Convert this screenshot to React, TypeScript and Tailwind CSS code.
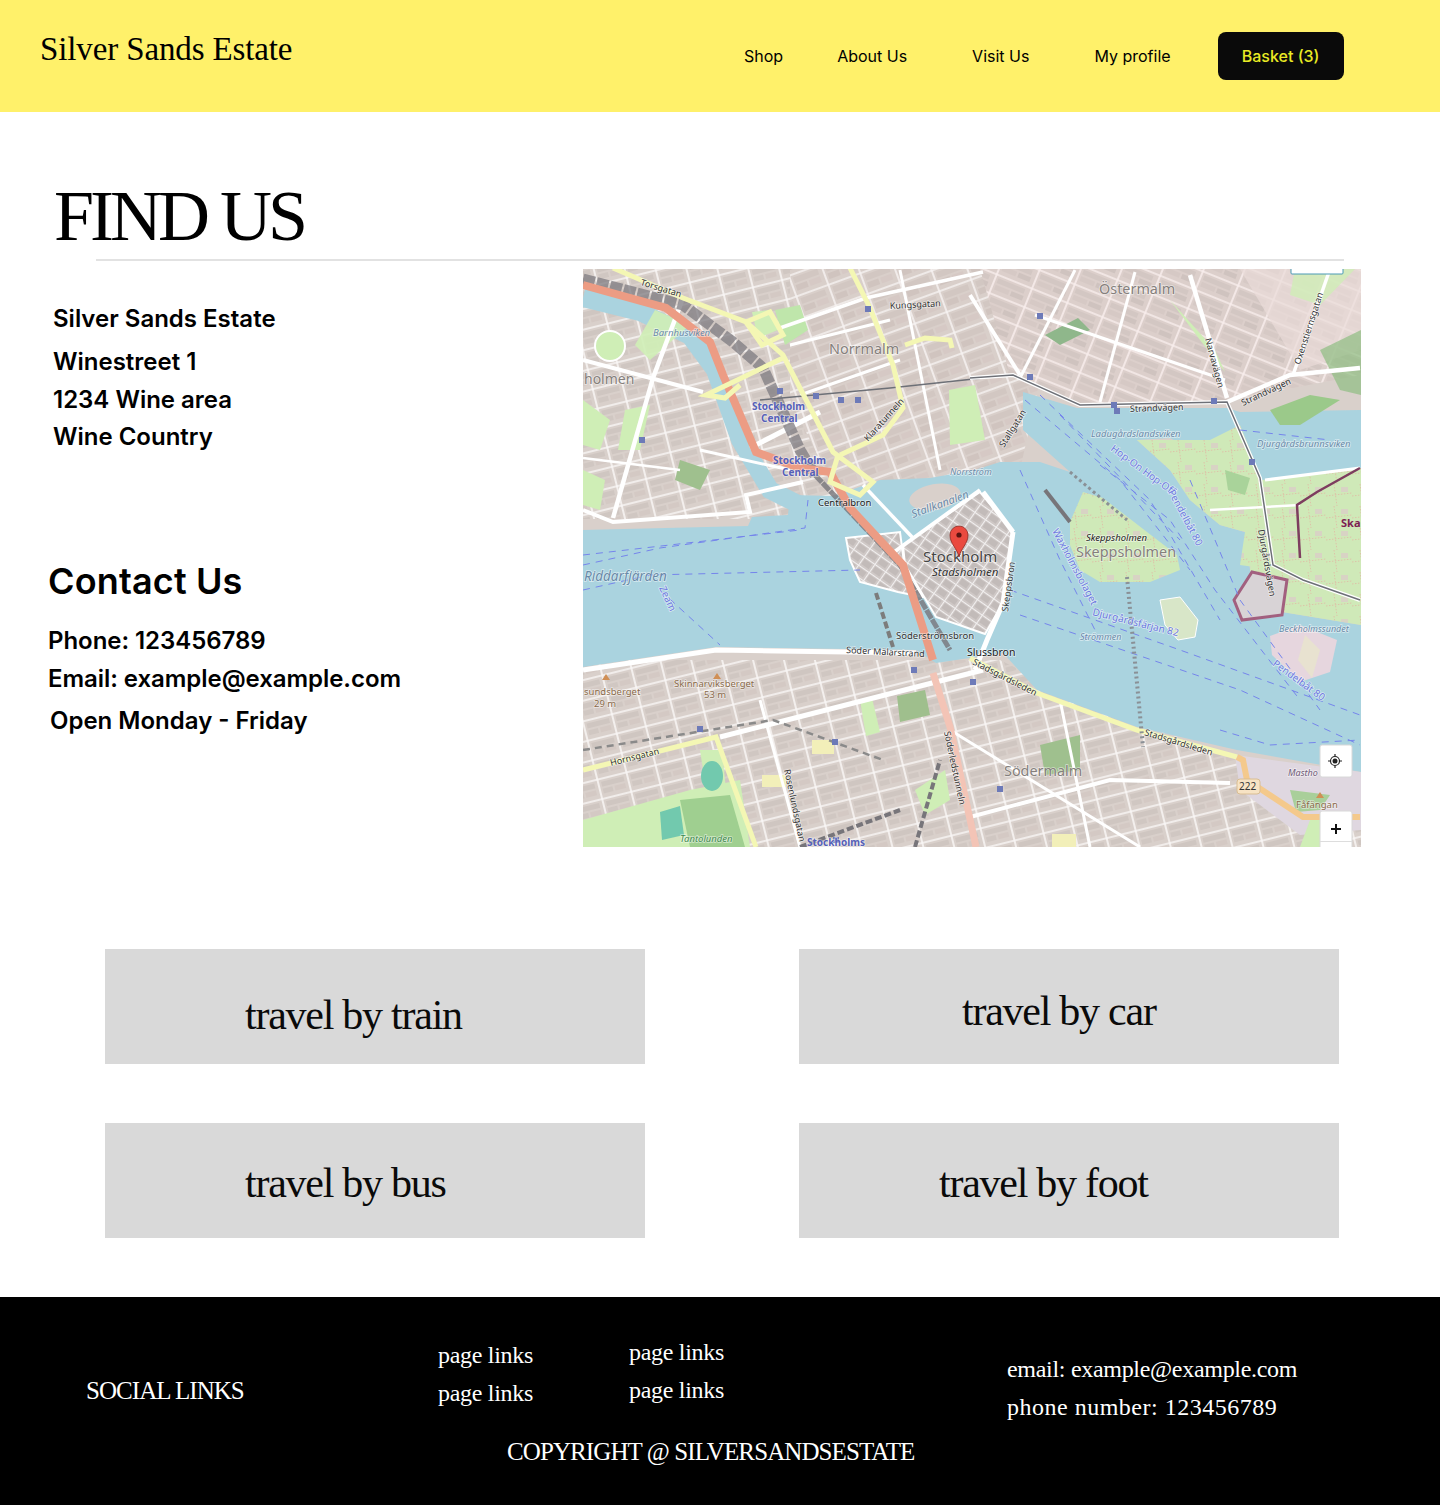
const navLinks = [
  { label: "Shop", className: "ml-0" },
  { label: "About Us", className: "ml-[54px]" },
  { label: "Visit Us", className: "ml-[65px]" },
  { label: "My profile", className: "ml-[65px]" },
];

const whiteRoads: [string, number][] = [
  ["M583 360 L703 392", 4],
  ["M683 298 L653 378 L613 518", 4.5],
  ["M583 510 L613 522 L750 512 L746 495 L803 482", 4],
  ["M780 328 L866 298 L983 272", 3.5],
  ["M970 295 L1020 375", 4],
  ["M1190 275 L1227 398", 4.5],
  ["M1227 402 L1290 375 L1360 368", 4.5],
  ["M1330 269 L1293 375", 3.5],
  ["M720 737 L983 670", 5],
  ["M970 817 L1110 780 L1230 783", 4],
  ["M583 670 L716 650 L916 653", 5],
  ["M1013 532 L1003 603 L987 640 L975 670", 5],
  ["M890 555 L980 490", 4],
  ["M863 485 L913 538", 3.5],
  ["M983 492 L1013 532", 5],
  ["M790 470 L700 450", 3],
  ["M790 345 L890 320", 3],
  ["M800 395 L900 360", 3],
  ["M900 270 L940 470", 3],
  ["M1020 378 L1075 270", 3],
  ["M1100 402 L1135 272", 3],
  ["M1035 315 L1225 380", 3],
  ["M800 847 L760 700", 3],
  ["M1090 847 L1060 700", 3],
  ["M950 730 L1140 847", 3],
  ["M1265 480 L1360 468", 3],
  ["M1210 510 L1300 505", 2.5],
  ["M583 458 L680 470", 2.5],
  ["M750 448 L820 412", 5],
];

const yellowRoads = [
  "M613 268 L683 298 L746 322 L783 355 L833 452 L873 482 L860 495 L830 482 L838 455",
  "M850 268 L870 308 L893 365 L903 408 L883 435 L840 455",
  "M783 358 L706 395 L725 398 L740 385",
  "M746 322 L770 312 L783 335 L762 345 L746 322",
  "M905 345 L925 338 L950 340 L952 348",
  "M583 770 L716 737 L756 847",
  "M970 658 L1037 693 L1137 730 L1237 757",
];

const ferryLines = [
  "M583 565 L660 548 L805 528 L808 500",
  "M583 590 L650 575 L860 570",
  "M660 590 L720 645",
  "M583 555 L800 530",
  "M1025 400 L1120 480 L1190 570",
  "M1040 395 L1150 500 L1220 620",
  "M1060 415 L1180 540",
  "M1020 470 L1060 560 L1100 640",
  "M1010 590 L1180 650 L1360 715",
  "M1020 615 L1240 690 L1360 745",
  "M1100 465 L1170 520 L1215 590 L1300 700",
  "M1190 480 L1240 600 L1320 710",
  "M1220 730 L1270 745 L1360 740",
  "M1240 430 L1330 440",
];

const labels: { text: string; x: number; y: number; size: number; fill: string; rotate?: number; italic?: boolean; bold?: boolean }[] = [
  { text: "Östermalm", x: 1099, y: 294, size: 14.4, fill: "#857f7c" },
  { text: "Norrmalm", x: 829, y: 354, size: 14.4, fill: "#857f7c" },
  { text: "holmen", x: 584, y: 384, size: 14, fill: "#857f7c" },
  { text: "Stockholm", x: 923, y: 562, size: 15, fill: "#444444" },
  { text: "Stadsholmen", x: 932, y: 576, size: 11.5, fill: "#333333", italic: true },
  { text: "Skeppsholmen", x: 1076, y: 557, size: 14.4, fill: "#857f7c" },
  { text: "Skeppsholmen", x: 1086, y: 541, size: 9.5, fill: "#222222", italic: true },
  { text: "Södermalm", x: 1004, y: 776, size: 14.4, fill: "#857f7c" },
  { text: "Riddarfjärden", x: 584, y: 581, size: 13.5, fill: "#6a8aa8", italic: true },
  { text: "Stockholm", x: 752, y: 410, size: 10, fill: "#5560b8", bold: true },
  { text: "Central", x: 761, y: 422, size: 10, fill: "#5560b8", bold: true },
  { text: "Stockholm", x: 773, y: 464, size: 10, fill: "#5560b8", bold: true },
  { text: "Central", x: 782, y: 476, size: 10, fill: "#5560b8", bold: true },
  { text: "Stockholms", x: 807, y: 846, size: 10, fill: "#5560b8", bold: true },
  { text: "Centralbron", x: 818, y: 506, size: 9.5, fill: "#222222" },
  { text: "Söderströmsbron", x: 896, y: 639, size: 9.5, fill: "#333333" },
  { text: "Söder Mälarstrand", x: 846, y: 653, size: 9, fill: "#333333", rotate: 3 },
  { text: "Slussbron", x: 967, y: 656, size: 10.5, fill: "#222222" },
  { text: "Kungsgatan", x: 890, y: 309, size: 9, fill: "#333333", rotate: -3 },
  { text: "Strandvägen", x: 1130, y: 412, size: 9, fill: "#333333", rotate: -2 },
  { text: "Strandvägen", x: 1243, y: 406, size: 9, fill: "#333333", rotate: -25 },
  { text: "Torsgatan", x: 640, y: 285, size: 9, fill: "#333333", rotate: 17 },
  { text: "Klaratunneln", x: 868, y: 442, size: 9, fill: "#333333", rotate: -48 },
  { text: "Stallgatan", x: 1004, y: 448, size: 9, fill: "#333333", rotate: -58 },
  { text: "Narvavägen", x: 1205, y: 339, size: 9, fill: "#333333", rotate: 75 },
  { text: "Oxenstiernsgatan", x: 1300, y: 365, size: 9, fill: "#333333", rotate: -72 },
  { text: "Djurgårdsvägen", x: 1258, y: 530, size: 9, fill: "#333333", rotate: 80 },
  { text: "Hornsgatan", x: 611, y: 766, size: 9, fill: "#333333", rotate: -14 },
  { text: "Rosenlundsgatan", x: 784, y: 770, size: 9, fill: "#333333", rotate: 78 },
  { text: "Söderledstunneln", x: 944, y: 732, size: 9, fill: "#333333", rotate: 78 },
  { text: "Skeppsbron", x: 1008, y: 612, size: 9, fill: "#333333", rotate: -82 },
  { text: "Stadsgårdsleden", x: 972, y: 664, size: 9, fill: "#333333", rotate: 27 },
  { text: "Stadsgårdsleden", x: 1144, y: 735, size: 9, fill: "#333333", rotate: 17 },
  { text: "Skinnarviksberget", x: 674, y: 687, size: 9.5, fill: "#8a6a4a" },
  { text: "53 m", x: 704, y: 698, size: 9.5, fill: "#8a6a4a" },
  { text: "sundsberget", x: 584, y: 695, size: 9.5, fill: "#8a6a4a" },
  { text: "29 m", x: 594, y: 707, size: 9.5, fill: "#8a6a4a" },
  { text: "Tantolunden", x: 680, y: 842, size: 9.5, fill: "#3f8a4f", italic: true },
  { text: "Barnhusviken", x: 653, y: 336, size: 9.5, fill: "#6a8aa8", italic: true },
  { text: "Ladugårdslandsviken", x: 1091, y: 437, size: 9.5, fill: "#6a8aa8", italic: true },
  { text: "Djurgårdsbrunnsviken", x: 1257, y: 447, size: 9.5, fill: "#6a8aa8", italic: true },
  { text: "Stallkanalen", x: 913, y: 518, size: 11, fill: "#6a8aa8", italic: true, rotate: -20 },
  { text: "Norrström", x: 950, y: 475, size: 9, fill: "#6a8aa8", italic: true },
  { text: "Strömmen", x: 1080, y: 640, size: 9, fill: "#6a8aa8", italic: true },
  { text: "Beckholmssundet", x: 1279, y: 632, size: 9, fill: "#6a8aa8", italic: true },
  { text: "Hop-On Hop-Off", x: 1110, y: 450, size: 10, fill: "#6c78e0", rotate: 36 },
  { text: "Pendelbåt 80", x: 1168, y: 492, size: 10, fill: "#6c78e0", rotate: 62 },
  { text: "Pendelbåt 80", x: 1272, y: 665, size: 10, fill: "#6c78e0", rotate: 36 },
  { text: "Waxholmsbolaget", x: 1052, y: 531, size: 10, fill: "#6c78e0", rotate: 62 },
  { text: "Djurgårdsfärjan 82", x: 1092, y: 615, size: 10, fill: "#6c78e0", rotate: 14 },
  { text: "Zeam", x: 659, y: 588, size: 10, fill: "#6c78e0", rotate: 65 },
  { text: "Mastho", x: 1288, y: 776, size: 9, fill: "#6f5a78", italic: true },
  { text: "Fåfängan", x: 1296, y: 808, size: 9.5, fill: "#8a6a4a" },
];

function MapPatterns() {
  return (
    <defs>
      <filter id="soften" x="0" y="0" width="100%" height="100%">
        <feGaussianBlur stdDeviation="0.45" />
      </filter>
      <pattern id="blocksA" width="34" height="22" patternUnits="userSpaceOnUse" patternTransform="rotate(-20)">
        <rect width="34" height="22" fill="#d9cfca" />
        <rect x="4" y="4" width="26" height="6" fill="#d2c7c2" />
        <rect x="4" y="12" width="12" height="6" fill="#d0c4bf" />
        <rect x="18" y="12" width="12" height="6" fill="#d6c9c5" />
        <path d="M0 1 H34 M1 0 V22" stroke="#f7f3f2" strokeWidth="1.6" />
      </pattern>
      <pattern id="blocksB" width="38" height="20" patternUnits="userSpaceOnUse" patternTransform="rotate(22)">
        <rect width="38" height="20" fill="#dccfcb" />
        <rect x="4" y="4" width="29" height="5" fill="#d3c7c3" />
        <rect x="4" y="11" width="15" height="5" fill="#d6c9c5" />
        <rect x="21" y="11" width="13" height="5" fill="#cfc3bf" />
        <path d="M0 1 H38 M1 0 V20" stroke="#f9eeed" strokeWidth="1.6" />
      </pattern>
      <pattern id="blocksC" width="30" height="20" patternUnits="userSpaceOnUse" patternTransform="rotate(-14)">
        <rect width="30" height="20" fill="#d9d0cb" />
        <rect x="4" y="4" width="23" height="5" fill="#cfc6c1" />
        <rect x="4" y="11" width="10" height="5" fill="#d0c7c2" />
        <rect x="16" y="11" width="11" height="5" fill="#d4c9c4" />
        <path d="M0 1 H30 M1 0 V20" stroke="#faf7f6" strokeWidth="1.6" />
      </pattern>
      <pattern id="blocksD" width="13" height="10" patternUnits="userSpaceOnUse" patternTransform="rotate(35)">
        <rect width="13" height="10" fill="#cfc8c6" />
        <rect x="2" y="2" width="9" height="6" fill="#c2bbb9" />
        <path d="M0 .5 H13 M.5 0 V10" stroke="#f2f0f0" strokeWidth="1" />
      </pattern>
      <pattern id="greenDots" width="26" height="22" patternUnits="userSpaceOnUse">
        <rect width="26" height="22" fill="#cfe9b8" />
        <rect x="15" y="3" width="7" height="5" fill="#d8d3c4" />
        <path d="M0 12 L26 9 M8 0 L11 22" stroke="#e6a79c" strokeWidth="0.6" strokeDasharray="1.5 1.5" />
      </pattern>
    </defs>
  );
}

function StockholmMap() {
  return (
    <svg
      viewBox="583 269 778 578"
      className="block w-[778px] h-[578px] font-['Noto_Sans',sans-serif]"
      role="img"
      aria-label="Map of central Stockholm"
    >
      <MapPatterns />
      <g filter="url(#soften)">
        <rect x="583" y="269" width="778" height="578" fill="#d9d0cb" />

        {/* districts */}
        <rect x="583" y="269" width="260" height="250" fill="url(#blocksC)" />
        <path d="M790 269 H1000 L1040 380 L1020 470 L840 500 L790 400 Z" fill="url(#blocksA)" />
        <path d="M980 269 H1361 V375 L1230 400 L1080 405 L1010 375 Z" fill="url(#blocksB)" />
        <path d="M583 660 H1000 L1140 730 L1361 790 V847 H583 Z" fill="url(#blocksC)" />
        <path d="M1240 269 H1361 V350 L1300 370 Z" fill="#eadbd8" opacity="0.7" />

        {/* water */}
        <path
          d="M583 530 L748 526 L752 517 L788 515 L790 495 L833 496 L880 480 L930 478 L975 470 L1000 462 L1040 462 L1070 472 L1023 430 L1023 392 L1077 408 L1227 408 L1240 412 L1361 410 V468 L1320 490 L1300 495 L1262 480 L1230 470 L1170 438 L1137 440 L1170 470 L1190 500 L1220 525 L1245 532 L1250 570 L1270 610 L1361 625 V772 L1237 750 L1137 727 L1037 690 L1003 653 L936 663 L916 650 L716 647 L583 667 Z"
          fill="#aad3df"
        />
        <path d="M583 298 L640 312 L690 336 L715 370 L740 440 L770 490 L800 505" fill="none" stroke="#aad3df" strokeWidth="18" />

        {/* islands and land over the water */}
        <path d="M1070 522 L1083 492 L1103 498 L1147 532 L1177 555 L1180 570 L1150 582 L1100 582 L1080 570 L1070 545 Z" fill="url(#greenDots)" />
        <path d="M1160 600 L1180 597 L1198 620 L1195 637 L1178 640 L1165 625 Z" fill="#d8e6c8" stroke="#ffffff" />
        <path d="M846 538 L900 532 L905 570 L923 597 L898 592 L860 582 L850 560 Z" fill="url(#blocksD)" stroke="#ffffff" strokeWidth="2" />
        <path d="M903 545 L980 492 L1013 532 L1003 603 L985 634 L936 617 L920 590 L905 565 Z" fill="url(#blocksD)" stroke="#ffffff" strokeWidth="2" />
        <ellipse cx="935" cy="497" rx="26" ry="13" fill="#d9d0cb" transform="rotate(-10 935 497)" />
        <path d="M1210 440 L1240 425 L1262 480 L1275 570 L1240 565 L1245 532 L1220 525 L1190 500 L1170 470 L1137 440 Z" fill="url(#greenDots)" />
        <path d="M1262 480 L1361 468 V625 L1270 610 L1250 570 Z" fill="url(#greenDots)" />
        <path d="M1270 636 L1300 625 L1337 640 L1330 672 L1300 682 L1272 655 Z" fill="#e6d6de" />
        <path d="M1305 635 L1320 650 L1312 678 L1298 660 Z" fill="#e8e2d0" />
        <path d="M1234 600 L1252 572 L1287 580 L1282 615 L1242 620 Z" fill="#d8d3d6" stroke="#a2607f" strokeWidth="3" />
        <path d="M1235 755 L1361 772 V830 L1300 835 L1240 790 Z" fill="#dfd7e0" />

        {/* parks */}
        <path d="M583 400 L610 420 L600 450 L583 445 Z" fill="#cfeeb6" />
        <path d="M690 325 L655 310 L635 345 L650 360 Z" fill="#cfeeb6" opacity="0.9" />
        <path d="M583 470 L605 480 L600 510 L583 505 Z" fill="#cfeeb6" />
        <path d="M625 410 L650 405 L640 450 L618 450 Z" fill="#cfeeb6" />
        <path d="M680 460 L710 470 L700 490 L675 480 Z" fill="#9fc08e" />
        <circle cx="610" cy="346" r="15" fill="#cfeeb6" stroke="#ffffff" strokeWidth="2" />
        <path d="M752 312 L770 310 L778 330 L758 338 Z" fill="#cfeeb6" />
        <path d="M775 310 L800 305 L808 330 L785 345 Z" fill="#bfe6ab" />
        <path d="M949 390 L975 385 L985 440 L950 445 Z" fill="#cfeeb6" />
        <path d="M1045 335 L1078 318 L1090 330 L1060 345 Z" fill="#8fb78b" />
        <path d="M1225 470 L1250 478 L1245 495 L1228 490 Z" fill="#a9d39a" />
        <path d="M1270 410 L1310 395 L1340 400 L1300 425 L1280 425 Z" fill="#9bc98a" />
        <path d="M1170 300 L1215 350 L1225 372 L1200 340 Z" fill="#cfeeb6" />
        <path d="M1295 269 L1355 269 L1320 305 L1290 295 Z" fill="#cfeeb6" opacity="0.8" />
        <path d="M1320 350 L1361 330 V395 L1340 390 Z" fill="#8fbe82" opacity="0.7" />
        <path d="M583 820 L690 790 L740 780 L750 847 H583 Z" fill="#cfeeb6" />
        <path d="M680 800 L730 795 L745 847 H690 Z" fill="#9fcf90" />
        <path d="M660 812 L680 806 L684 835 L662 840 Z" fill="#72c9ae" />
        <path d="M700 750 L722 750 L726 790 L706 790 Z" fill="#cfeeb6" />
        <ellipse cx="712" cy="776" rx="11" ry="15" fill="#72c9ae" />
        <path d="M860 700 L872 698 L880 732 L866 736 Z" fill="#cfeeb6" />
        <path d="M897 696 L925 690 L930 715 L900 722 Z" fill="#9fbf8d" />
        <path d="M915 790 L945 770 L950 800 L925 815 Z" fill="#cfeeb6" />
        <path d="M1040 745 L1080 735 L1080 770 L1045 775 Z" fill="#9fc08e" />
        <path d="M1290 790 L1330 795 L1320 810 L1296 812 Z" fill="#a9cf9a" />
        <path d="M1310 820 L1350 815 L1350 847 H1300 Z" fill="#cfeeb6" />
        <rect x="1052" y="834" width="24" height="13" fill="#f2efb9" />
        <rect x="812" y="740" width="22" height="14" fill="#f2efb9" />
        <rect x="762" y="775" width="24" height="12" fill="#f2efb9" />

        {/* roads */}
        {whiteRoads.map(([d, width]) => (
          <path key={d} d={d} fill="none" stroke="#ffffff" strokeWidth={width} />
        ))}

        {/* railways and tram */}
        <path d="M583 279 L683 305 L733 342 L763 368 L800 450 L815 475" fill="none" stroke="#7d7b80" strokeWidth="11" opacity="0.75" strokeDasharray="12 2" />
        <path d="M815 475 L900 565 L950 650" fill="none" stroke="#77757a" strokeWidth="5" opacity="0.8" strokeDasharray="10 1" />
        <path d="M760 400 L890 388 L983 378" fill="none" stroke="#6d7077" strokeWidth="1.5" />
        <path d="M970 378 L1013 375 L1080 405 L1227 402 L1260 478 L1273 565 L1303 580 L1360 600" fill="none" stroke="#ffffff" strokeWidth="4" />
        <path d="M970 378 L1013 375 L1080 405 L1227 402 L1260 478 L1273 565 L1303 580 L1360 600" fill="none" stroke="#6d7077" strokeWidth="1.5" />
        <path d="M1045 490 L1070 522" fill="none" stroke="#77757a" strokeWidth="4" />

        {/* motorway and trunk */}
        <path d="M583 285 L666 308 L710 342 L723 375 L756 452 L800 468 L830 472 L850 508 L903 565 L933 660" fill="none" stroke="#ec9c84" strokeWidth="8" />
        <path d="M933 673 L950 727 L976 847" fill="none" stroke="#f3c4b6" strokeWidth="7" />
        {yellowRoads.map((d) => (
          <path key={d} d={d} fill="none" stroke="#f4f7b4" strokeWidth="5" />
        ))}
        <path d="M1237 757 L1243 760 L1247 780 L1303 817 L1360 817" fill="none" stroke="#f4c98c" strokeWidth="6" />

        {/* ferry lines and tunnels */}
        {ferryLines.map((d) => (
          <path key={d} d={d} fill="none" stroke="#7585ec" strokeWidth="1" strokeDasharray="7 6" />
        ))}
        <path d="M876 593 L893 647" fill="none" stroke="#7c7c7c" strokeWidth="4" strokeDasharray="7 3" />
        <path d="M1127 577 L1143 747" fill="none" stroke="#8a9096" strokeWidth="4" strokeDasharray="2 3" />
        <path d="M915 847 L940 760 M800 847 L900 810" fill="none" stroke="#77757a" strokeWidth="4" strokeDasharray="7 3" />
        <path d="M583 750 L773 720 L883 760" fill="none" stroke="#8a8a8a" strokeWidth="2.5" strokeDasharray="7 5" />
        <path d="M1070 472 L1127 520" fill="none" stroke="#8a9096" strokeWidth="3" strokeDasharray="3 3" />
        <path d="M1360 468 L1317 492 L1297 505 L1300 558" fill="none" stroke="#7d3c5e" strokeWidth="2.5" />

        {/* stations */}
        {[[642,440],[780,391],[816,396],[841,400],[858,400],[868,309],[1040,316],[1030,377],[1114,405],[1117,411],[1214,401],[1252,462],[700,729],[835,742],[973,682],[1000,789],[836,840],[914,670]].map(([x, y]) => (
          <rect key={`${x}-${y}`} x={x - 3} y={y - 3} width="6" height="6" fill="#6d7ab8" />
        ))}
        <path d="M602 680 l4 -6 l4 6 Z M713 679 l4 -6 l4 6 Z M1316 798 l4 -6 l4 6 Z" fill="#d08f55" />
      </g>

      {/* labels */}
      {labels.map((l) => (
        <text
          key={`${l.text}-${l.x}`}
          x={l.x}
          y={l.y}
          fontSize={l.size}
          fill={l.fill}
          fontStyle={l.italic ? "italic" : undefined}
          fontWeight={l.bold ? 700 : undefined}
          stroke="#ffffff"
          strokeOpacity="0.55"
          strokeWidth="1.5"
          paintOrder="stroke"
          transform={l.rotate ? `rotate(${l.rotate} ${l.x} ${l.y})` : undefined}
        >
          {l.text}
        </text>
      ))}
      <text x="1341" y="527" fontSize="11" fontWeight="700" fill="#7d1f52">Ska</text>
      <rect x="1237" y="779" width="23" height="15" rx="3" fill="#f7e3c4" stroke="#d9bd92" />
      <text x="1239" y="790" fontSize="10" fill="#333333">222</text>

      {/* marker */}
      <path d="M959 557 C957 548 950 544 950 535 A9 9 0 0 1 968 535 C968 544 961 548 959 557 Z" fill="#ea4a3f" stroke="#8f2a22" strokeWidth="0.8" />
      <circle cx="959" cy="535" r="2.6" fill="#5a1410" />

      {/* map controls */}
      <rect x="1291" y="262" width="52" height="12" rx="1" fill="#ffffff" stroke="#4a9ab5" />
      <rect x="1320" y="745" width="32" height="32" rx="2" fill="#ffffff" stroke="#d8d8d8" />
      <circle cx="1335" cy="761" r="4.5" fill="none" stroke="#222222" strokeWidth="1.2" />
      <circle cx="1335" cy="761" r="2.5" fill="#222222" />
      <path d="M1335 754 V756 M1335 766 V768 M1328 761 H1330 M1340 761 H1342" stroke="#222222" strokeWidth="1.2" />
      <rect x="1320" y="811" width="32" height="40" rx="2" fill="#ffffff" stroke="#d8d8d8" />
      <path d="M1320 841.5 H1352" stroke="#dddddd" />
      <path d="M1336 824 V834 M1331 829 H1341" stroke="#111111" strokeWidth="2" />
    </svg>
  );
}

function TravelCard({ label, className }: { label: string; className: string }) {
  return (
    <div className={`h-[115px] bg-[#d9d9d9] font-['Liberation_Serif',serif] text-[42px] leading-[52px] tracking-[-1.25px] text-[#0a0a0a] ${className}`}>
      {label}
    </div>
  );
}

export default function App() {
  return (
    <div className="w-[1440px] bg-white font-['Inter',sans-serif] text-black">
      <header className="flex h-[112px] items-start bg-[#fff16a] pl-[40px]">
        <a href="#" className="mt-[28px] w-[704px] font-['Liberation_Serif',serif] text-[33px] leading-[42px] tracking-[-0.13px]">
          Silver Sands Estate
        </a>
        <nav className="mt-[32px] flex h-[48px] items-center text-[16px]">
          {navLinks.map((link) => (
            <a key={link.label} href="#" className={link.className}>
              {link.label}
            </a>
          ))}
          <a href="#" className="ml-[47px] flex h-[48px] w-[126px] items-center justify-center rounded-lg bg-[#0a0a0a] font-medium text-[#e9ea24]">
            Basket (3)
          </a>
        </nav>
      </header>

      <main>
        <h1 className="pl-[54px] pt-[62px] font-['Liberation_Serif',serif] text-[72px] leading-[85px] tracking-[-4px]">
          FIND US
        </h1>
        <hr className="ml-[96px] w-[1248px] border-0 border-t-2 border-[#e2e2e2]" />

        <section className="flex">
          <div className="w-[583px] pt-[38px] text-[24px] font-semibold">
            <div className="pl-[53px] leading-[44px] -mt-[2px]">Silver Sands Estate</div>
            <address className="pl-[53px] not-italic leading-[37.5px] pt-[2px]">
              <div>Winestreet 1</div>
              <div>1234 Wine area</div>
              <div>Wine Country</div>
            </address>
            <h2 className="mt-[103px] pl-[48px] text-[36px] leading-[44px] tracking-[0.15px]">Contact Us</h2>
            <div className="mt-[19px] pl-[48px] leading-[38px] tracking-[-0.05px]">
              <div>Phone: 123456789</div>
              <div>Email: example@example.com</div>
            </div>
            <div className="mt-[4px] pl-[50px] leading-[38px]">Open Monday - Friday</div>
          </div>
          <div className="mt-[8px]">
            <StockholmMap />
          </div>
        </section>

        <section className="ml-[105px] mt-[102px] grid grid-cols-[540px_540px] gap-x-[154px] gap-y-[59px] pb-[59px]">
          <TravelCard label="travel by train" className="pl-[140px] pt-[40px]" />
          <TravelCard label="travel by car" className="pl-[163px] pt-[36px]" />
          <TravelCard label="travel by bus" className="pl-[140px] pt-[34px]" />
          <TravelCard label="travel by foot" className="pl-[140px] pt-[34px]" />
        </section>
      </main>

      <footer className="h-[208px] bg-black font-['Liberation_Serif',serif] text-white">
        <div className="flex h-[137px] items-start text-[24px] leading-[38px] tracking-[-0.3px]">
          <div className="ml-[86px] mt-[75px] w-[352px] text-[25px] tracking-[-0.95px]">SOCIAL LINKS</div>
          <div className="mt-[39px] w-[191px]">
            <div>page links</div>
            <div>page links</div>
          </div>
          <div className="mt-[36px] w-[378px]">
            <div>page links</div>
            <div>page links</div>
          </div>
          <div className="mt-[53px]">
            <div>email: example@example.com</div>
            <div className="tracking-[0.5px]">phone number: 123456789</div>
          </div>
        </div>
        <div className="pl-[507px] text-[25px] leading-[36px] tracking-[-0.9px]">COPYRIGHT @ SILVERSANDSESTATE</div>
      </footer>
    </div>
  );
}
